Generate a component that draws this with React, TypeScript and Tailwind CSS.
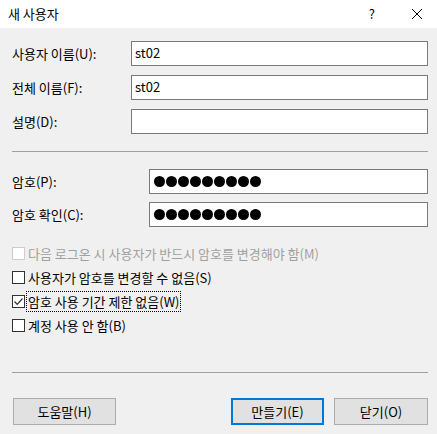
const font = "font-['Malgun_Gothic','Noto_Sans_CJK_KR',sans-serif]";

function Field({ value, dots }: { value?: string; dots?: boolean }) {
  return (
    <div className="flex-1 h-[25px] bg-white border border-[#7a7a7a] flex items-center px-[3px]">
      {dots ? (
        <div className="flex gap-px pl-[1px]">
          {Array.from({ length: 9 }).map((_, i) => (
            <span key={i} className="block w-[11px] h-[11px] rounded-full bg-black" />
          ))}
        </div>
      ) : (
        <span className="text-[13px] text-black leading-none -mt-[2px]">{value}</span>
      )}
    </div>
  );
}

function Check({ label, checked, disabled, focused }: { label: string; checked?: boolean; disabled?: boolean; focused?: boolean }) {
  return (
    <div className="h-[13px] flex items-center gap-[2px]">
      <span
        className={
          "w-[13px] h-[13px] border flex items-center justify-center bg-white shrink-0 " +
          (disabled ? "border-[#cccccc]" : "border-[#333333]")
        }
      >
        {checked && (
          <svg width="11" height="11" viewBox="0 0 11 11" fill="none">
            <path d="M1.5 5.5L4.2 8.3L9.5 2.5" stroke="#333333" strokeWidth="1.2" />
          </svg>
        )}
      </span>
      <span
        className={
          "text-[13px] leading-none px-[1px] py-[3px] whitespace-nowrap " +
          (disabled ? "text-[#a0a0a0]" : "text-black") +
          (focused ? " outline outline-1 outline-dotted outline-black" : "")
        }
      >
        {label}
      </span>
    </div>
  );
}

export default function App() {
  return (
    <div className={`w-[437px] h-[434px] bg-[#f0f0f0] flex flex-col overflow-hidden ${font}`}>
      <div className="h-[28px] bg-white flex items-center pl-[8px] pr-[14px]">
        <span className="text-[13px] text-black flex-1">새 사용자</span>
        <span className="text-[13px] text-black mr-[36px]">?</span>
        <svg width="12" height="12" viewBox="0 0 12 12">
          <path d="M1 1L11 11M11 1L1 11" stroke="#000" strokeWidth="1" />
        </svg>
      </div>

      <div className="flex flex-col pl-[12px] pr-[9px] pt-[13px]">
        <div className="flex flex-col gap-[9px] text-[13px]">
          <div className="flex items-center">
            <span className="w-[119px]">사용자 이름(U):</span>
            <Field value="st02" />
          </div>
          <div className="flex items-center">
            <span className="w-[119px]">전체 이름(F):</span>
            <Field value="st02" />
          </div>
          <div className="flex items-center">
            <span className="w-[119px]">설명(D):</span>
            <Field />
          </div>
        </div>

        <div className="h-px bg-[#a0a0a0] mt-[17px] mb-[17px]" />

        <div className="flex flex-col gap-[8px] text-[13px]">
          <div className="flex items-center">
            <span className="w-[137px]">암호(P):</span>
            <Field dots />
          </div>
          <div className="flex items-center">
            <span className="w-[137px]">암호 확인(C):</span>
            <Field dots />
          </div>
        </div>

        <div className="flex flex-col gap-[11px] mt-[20px]">
          <Check label="다음 로그온 시 사용자가 반드시 암호를 변경해야 함(M)" disabled />
          <Check label="사용자가 암호를 변경할 수 없음(S)" />
          <Check label="암호 사용 기간 제한 없음(W)" checked focused />
          <Check label="계정 사용 안 함(B)" />
        </div>

        <div className="h-px bg-[#a0a0a0] mt-[40px]" />

        <div className="flex items-center mt-[25px] text-[13px]">
          <button className="w-[103px] h-[27px] bg-[#e1e1e1] border border-[#adadad] text-black ml-px">
            도움말(H)
          </button>
          <div className="flex-1" />
          <button className="w-[93px] h-[27px] bg-[#e1e1e1] border-2 border-[#0078d7] text-black">
            만들기(E)
          </button>
          <button className="w-[94px] h-[27px] bg-[#e1e1e1] border border-[#adadad] text-black ml-[10px]">
            닫기(O)
          </button>
        </div>
      </div>
    </div>
  );
}
